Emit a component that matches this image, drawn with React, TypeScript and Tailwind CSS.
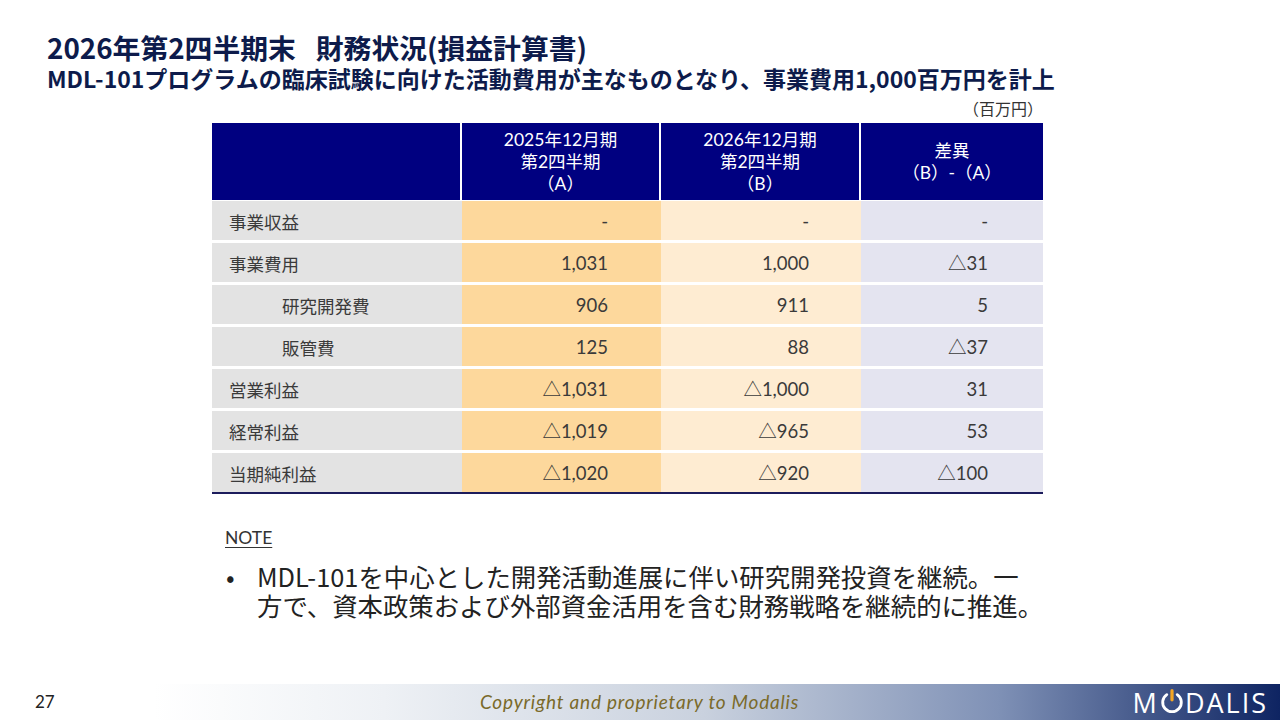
import React from 'react';

interface Row {
  label: string;
  a: string;
  b: string;
  d: string;
  indent?: boolean;
}

const rows: Row[] = [
  { label: '事業収益', a: '-', b: '-', d: '-' },
  { label: '事業費用', a: '1,031', b: '1,000', d: '△31' },
  { label: '研究開発費', a: '906', b: '911', d: '5', indent: true },
  { label: '販管費', a: '125', b: '88', d: '△37', indent: true },
  { label: '営業利益', a: '△1,031', b: '△1,000', d: '31' },
  { label: '経常利益', a: '△1,019', b: '△965', d: '53' },
  { label: '当期純利益', a: '△1,020', b: '△920', d: '△100' },
];

const jp = "font-['Noto_Sans_CJK_JP',sans-serif]";
const num = "font-['Lato','Noto_Sans_CJK_JP',sans-serif]";

function Logo() {
  return (
    <div className="flex items-center text-white text-[27px] leading-none tracking-[2px] font-['Open_Sans',sans-serif]">
      <span>M</span>
      <svg width="24" height="26" viewBox="0 0 22 24" className="mx-[1px]">
        <path
          d="M6.2 5.2 A8.6 8.6 0 1 0 15.8 5.2"
          fill="none"
          stroke="white"
          strokeWidth="2.6"
          strokeLinecap="round"
        />
        <line x1="11" y1="1.5" x2="11" y2="10" stroke="#f5a623" strokeWidth="3" strokeLinecap="round" />
      </svg>
      <span>DALIS</span>
    </div>
  );
}

export default function App() {
  return (
    <div className="w-[1280px] h-[720px] bg-white flex flex-col overflow-hidden">
      <div className={`pl-[47px] pt-[31px] text-[#0d1b4b] font-bold ${jp}`}>
        <h1 className="text-[27.8px] leading-[32px] whitespace-nowrap">
          2026年第2四半期末<span className="inline-block w-[20px]" />財務状況(損益計算書)
        </h1>
        <h2 className="text-[23px] leading-[28px] mt-[1px] whitespace-nowrap">
          MDL-101プログラムの臨床試験に向けた活動費用が主なものとなり、事業費用1,000百万円を計上
        </h2>
      </div>

      <div className="ml-[212px] w-[831px]">
        <div className={`text-right text-[16px] leading-[20px] text-[#333] mt-[6px] ${jp}`}>（百万円）</div>

        <div className={`mt-[5px] flex flex-col gap-[3px] text-[#3a3a3a] ${num}`}>
          <div className="grid grid-cols-[250px_199px_200px_182px] h-[77px] bg-[#000080] text-white text-[17.5px] leading-[22px] text-center mb-[-2px]">
            <div className="border-r-2 border-white" />
            <div className="border-r-2 border-white flex flex-col justify-center">
              <span>2025年12月期</span>
              <span>第2四半期</span>
              <span>（A）</span>
            </div>
            <div className="border-r-2 border-white flex flex-col justify-center">
              <span>2026年12月期</span>
              <span>第2四半期</span>
              <span>（B）</span>
            </div>
            <div className="flex flex-col justify-center">
              <span>差異</span>
              <span>（B）-（A）</span>
            </div>
          </div>

          {rows.map((r) => (
            <div key={r.label} className="grid grid-cols-[250px_199px_200px_182px] h-[39px] text-[18.5px]">
              <div
                className={`bg-[#e3e3e3] flex items-center pt-[3px] text-[17.5px] ${jp} ${
                  r.indent ? 'pl-[70px]' : 'pl-[17px]'
                }`}
              >
                {r.label}
              </div>
              <div className="bg-[#fdd89c] flex items-center justify-end pr-[53px] pt-[3px]">{r.a}</div>
              <div className="bg-[#feecd2] flex items-center justify-end pr-[52px] pt-[3px]">{r.b}</div>
              <div className="bg-[#e4e4f0] flex items-center justify-end pr-[55px] pt-[3px]">{r.d}</div>
            </div>
          ))}
        </div>
        <div className="h-[2px] bg-[#1c1c5c]" />
      </div>

      <div className={`pl-[225px] mt-[32px] text-[#333] ${num}`}>
        <span className="text-[17.5px] leading-[22px] underline underline-offset-[3px]">NOTE</span>
      </div>

      <div className={`pl-[226px] mt-[12px] flex text-[25.4px] leading-[29px] text-[#222] ${jp}`}>
        <span className="w-[31px]">•</span>
        <div>
          <div>MDL-101を中心とした開発活動進展に伴い研究開発投資を継続。一</div>
          <div>方で、資本政策および外部資金活用を含む財務戦略を継続的に推進。</div>
        </div>
      </div>

      <div className="mt-auto h-[36px] flex items-center bg-[linear-gradient(to_right,#ffffff_12%,#eef1f5_30%,#c9d1de_55%,#7f91b6_78%,#0e2462_100%)]">
        <span className={`pl-[35px] w-[480px] text-[17px] text-[#222] ${num}`}>27</span>
        <span className={`flex-1 italic text-[19px] tracking-[0.8px] text-[#7a6a2a] ${num}`}>
          Copyright and proprietary to Modalis
        </span>
        <div className="pr-[12px]">
          <Logo />
        </div>
      </div>
    </div>
  );
}
